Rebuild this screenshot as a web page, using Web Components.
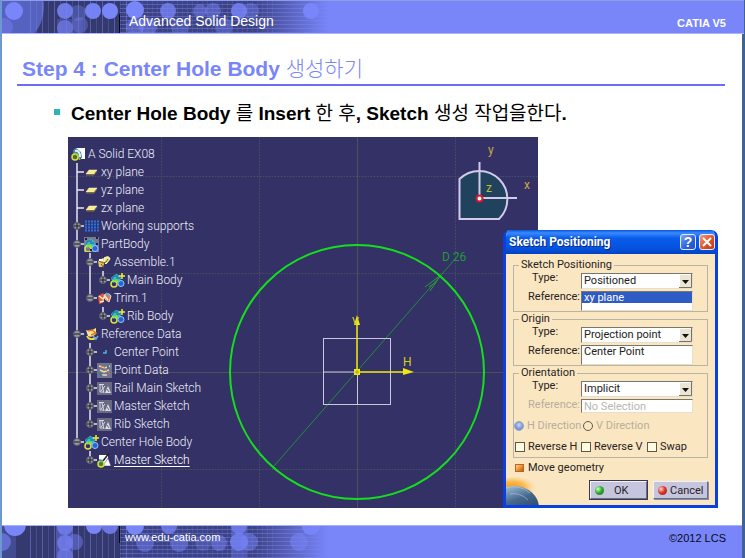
<!DOCTYPE html>
<html lang="ko">
<head>
<meta charset="utf-8">
<title>Advanced Solid Design</title>
<style>
body{margin:0;font-family:"Liberation Sans","Noto Sans CJK KR",sans-serif}
</style>
</head>
<body>
<slide-page>
  <slide-band slot="top" kind="header"><span>Advanced Solid Design</span><strong slot="end">CATIA V5</strong></slide-band>
  <slide-title>Step 4 : Center Hole Body <span lang="ko">생성하기</span></slide-title>
  <slide-bullet>Center Hole Body <span lang="ko">를</span> Insert <span lang="ko">한 후</span>, Sketch <span lang="ko">생성 작업을한다</span>.</slide-bullet>
  <cad-stage>
    <cad-scene>
      <cad-tree>
        <tree-row icon="root">A Solid EX08</tree-row>
        <tree-row guides="T" icon="plane">xy plane</tree-row>
        <tree-row guides="T" icon="plane">yz plane</tree-row>
        <tree-row guides="T" icon="plane">zx plane</tree-row>
        <tree-row guides="T" toggle="+" icon="grid">Working supports</tree-row>
        <tree-row guides="T" toggle="-" icon="partbody">PartBody</tree-row>
        <tree-row guides="IT" toggle="-" icon="assemble">Assemble.1</tree-row>
        <tree-row guides="IIL" toggle="+" icon="body">Main Body</tree-row>
        <tree-row guides="IL" toggle="-" icon="trim">Trim.1</tree-row>
        <tree-row guides="I.L" toggle="+" icon="body">Rib Body</tree-row>
        <tree-row guides="T" toggle="-" icon="refdata">Reference Data</tree-row>
        <tree-row guides="IT" toggle="+" icon="point">Center Point</tree-row>
        <tree-row guides="IT" toggle="+" icon="pointdata">Point Data</tree-row>
        <tree-row guides="IT" toggle="+" icon="sketch">Rail Main Sketch</tree-row>
        <tree-row guides="IT" toggle="+" icon="sketch">Master Sketch</tree-row>
        <tree-row guides="IL" toggle="+" icon="sketch">Rib Sketch</tree-row>
        <tree-row guides="L" toggle="-" icon="body">Center Hole Body</tree-row>
        <tree-row guides=".L" toggle="+" icon="newsketch" current>Master Sketch</tree-row>
      </cad-tree>
    </cad-scene>
    <position-dialog slot="dialog"></position-dialog>
  </cad-stage>
  <slide-band slot="bottom" kind="footer"><a href="http://www.edu-catia.com">www.edu-catia.com</a><span slot="end">©2012 LCS</span></slide-band>
</slide-page>

<script>
function define(name, html, after){
  customElements.define(name, class extends HTMLElement{
    connectedCallback(){
      if(this.shadowRoot) return;
      const root=this.attachShadow({mode:'open'});
      root.innerHTML=typeof html==='function'?html(this):html;
      if(after) after(this,root);
    }
  });
}

define('slide-page',`<style>
:host{display:flex;flex-direction:column;min-height:100vh;box-sizing:border-box;
 background:linear-gradient(90deg,#6f97d0,#4a74ae 60%,#3f6494);padding:0 3px 0 2px}
main{flex:1;background:#fff;padding:0 17px 0 15px;display:flex;flex-direction:column}
</style><slot name="top"></slot><main><slot></slot></main><slot name="bottom"></slot>`);

/* Decorative circle pattern that fades into the plain band colour */
function bandArt(kind){
  let s='';
  const ball=a=>`<circle cx="${a[0]}" cy="${a[1]}" r="${a[2]}" fill="#7986fa" opacity="${a[3]}"/>`;
  s+='<rect width="340" height="33" fill="#343a70"/>';
  s+='<rect x="120" width="220" height="33" fill="#454da0" opacity=".45"/>';
  if(kind==='header') s+='<circle cx="0" cy="6" r="42" fill="#5964c4" opacity=".95"/>'; else s+='<rect width="14" height="33" fill="#434b91"/>';
  for(let x=28;x<135;x+=6) s+=`<rect x="${x}" width="1" height="33" fill="#8b93e8" opacity="${x%4?0.22:0.4}"/>`;
  for(let y=3;y<33;y+=4) s+=`<rect x="118" y="${y}" width="222" height="1" fill="#8b93f0" opacity=".38"/>`;
  for(let x=140;x<275;x+=5) s+=`<rect x="${x}" width="1" height="33" fill="#7781d8" opacity=".22"/>`;
  if(kind==='header'){
    s+=[[12,10,9,1],[2,26,9,.4],[63,10,8,.85],[63,27,8,.7],[76,12,8,.35],[78,24,8,.35],[91,10,8,.95],[108,10,8,1],[133,9,9,1],[133,26,9,.5],[146,26,9,.5],[166,10,8,.75],[178,26,9,.35],[198,10,7,.45],[211,10,8,.45],[222,26,9,.4],[237,10,8,.8],[249,10,8,.4]].map(ball).join('');
    s+='<rect x="55" y="18" width="26" height="15" fill="#6771d8" opacity=".35"/>';
  }else{
    s+=[[13,-1,11,1],[0,16,9,.6],[63,1,8,.8],[63,17,8,.75],[63,30,8,.6],[73,16,8,.45],[92,0,8,1],[108,0,8,.8],[133,0,9,1],[143,17,9,.45],[167,0,8,.75],[177,17,9,.5],[201,17,8,.3],[217,17,8,.5],[237,0,8,.75],[237,16,9,.8],[247,16,9,.5]].map(ball).join('');
    s+='<rect x="54" width="17" height="33" fill="#6f7aea" opacity=".45"/><rect x="229" width="16" height="33" fill="#6f7aea" opacity=".4"/>';
  }
  const over=(kind==='header'?[[309,10,8,1]]:[[297,16,9,.5],[309,0,9,.9]]).map(ball).join('');
  return `<svg width="340" height="33" viewBox="0 0 340 33" aria-hidden="true"><defs><linearGradient id="f"><stop offset="0" stop-color="#7986fa" stop-opacity="0"/><stop offset=".74" stop-color="#7986fa" stop-opacity="0"/><stop offset=".96" stop-color="#7986fa"/></linearGradient></defs>${s}<rect width="340" height="33" fill="url(#f)"/>${over}<path d="M117.500 ${kind==='header'?'13V32':'0V17'}" stroke="#080818"/></svg>`;
}
define('slide-band',el=>`<style>
:host{display:grid;grid-template-columns:1fr auto;background:#7986fa;color:#fff;box-sizing:border-box;height:34px;overflow:hidden;
 border-top:1px solid #8d9dea;align-items:start}
:host([kind=header]){border-bottom:1px solid #b0b6fb;margin-right:-2px}
:host([kind=footer]){border-top-color:#a7affb;height:33px}
svg{grid-area:1/1;display:block}
.start{grid-area:1/1;z-index:1}
:host([kind=header]) .start{font-size:14px;line-height:16px;padding:12px 0 0 127px}
:host([kind=header]) .end{font-size:11px;line-height:12px;padding:16px 18px 0 0}
:host([kind=footer]) .start{font-size:11px;line-height:14px;padding:4px 0 0 123px}
:host([kind=footer]) .end{font-size:11px;line-height:12px;padding:6px 16px 0 0;color:#080818}
::slotted(a){color:#fff;text-decoration:none}
</style>${bandArt(el.getAttribute('kind'))}<div class="start"><slot></slot></div><div class="end"><slot name="end"></slot></div>`);

define('slide-title',`<style>
:host{display:block;border-bottom:2px solid #6d6ef8;padding:22px 5px 2px;color:#7986fa}
h1{margin:0;font-size:21px;line-height:26px;font-weight:700;white-space:nowrap}
::slotted(span){font-weight:300}
</style><h1><slot></slot></h1>`);

define('slide-bullet',`<style>
:host{display:flex;align-items:center;gap:11px;padding:15px 0 11px 37px;font-size:19px;line-height:25px;font-weight:700;color:#000;white-space:nowrap}
i{width:6px;height:6px;background:#2fb3b5;margin-bottom:4px}
p{margin:0}
::slotted(span){font-weight:400}
</style><i></i><p><slot></slot></p>`);

define('cad-stage',`<style>
:host{display:grid;grid-template-columns:1fr 215px;margin:0 7px 0 51px}
.scene{grid-area:1/1;margin-right:-35px;display:grid}
.dialog{grid-area:1/2;padding-top:93px;z-index:1}
</style><div class="scene"><slot></slot></div><div class="dialog"><slot name="dialog"></slot></div>`);

define('cad-scene',`<style>
:host{display:grid;background:#333166;overflow:hidden}
svg{grid-area:1/1;display:block}
.tree{grid-area:1/1;z-index:1;padding:8px 0 0 3px}
text{font-family:Roboto,"Liberation Sans",sans-serif}
</style>
<svg width="470" height="371" viewBox="0 0 470 371" role="img" aria-label="Sketch view">
<g stroke="#49515f" fill="none">
<path d="M93.500 0V371M191.500 0V371M387.500 0V371M0 39.500H470M0 136.500H470M0 332.500H470" stroke-dasharray="1 2"/>
<path d="M93.500 0V371M191.500 0V371M387.500 0V371M0 39.500H470M0 136.500H470M0 332.500H470" opacity=".3"/>
<path d="M289.500 0V371M0 235.500H470" stroke-width="1"/></g>
<path d="M206 329L388 121" stroke="#218c3c"/>
<path d="M373 138L362 154M373 138L357 150M368 145L361 150" stroke="#2a9b3c" fill="none"/>
<circle cx="289" cy="235" r="127" fill="none" stroke="#15df1c" stroke-width="2"/>
<g fill="none" stroke="#c9c6de" stroke-width="1"><rect x="255.500" y="201.500" width="67" height="66"/><path d="M256 235H289M289.500 235V267"/></g>
<g stroke="#efe811" stroke-width="1.500"><path d="M289 235V182M289 235H336"/></g>
<path d="M286 188L289 178L292 188ZM335 231L346 235L335 238Z" fill="#efe811"/><rect x="286" y="232" width="6" height="6" fill="#efe811"/>
<path d="M287 235H291M289 233V237" stroke="#a4a622"/>
<text x="284" y="188" font-size="11" fill="#d5ce24">V</text><text x="335" y="229" font-size="12" fill="#d5ce24">H</text>
<text x="374" y="124" font-size="12" fill="#219b33">D 26</text>
<path d="M391.500 42A28 28 0 0 1 431 82H391.500Z" fill="#20425d" stroke="#d3c9ea" stroke-width="2"/>
<path d="M411.500 25V61H449" fill="none" stroke="#d3c9ea" stroke-width="2"/>
<circle cx="411.500" cy="61.500" r="3" fill="#fff" stroke="#d91731" stroke-width="2"/>
<g font-size="12" fill="#c3aa43"><text x="420" y="17">y</text><text x="456" y="52">x</text><text x="418" y="55" fill="#bebf38">z</text></g>
</svg><div class="tree"><slot></slot></div>`);

define('cad-tree',`<style>:host{display:flex;flex-direction:column;align-items:flex-start;font:300 12px Roboto,"Liberation Sans",sans-serif;color:#f0eef8}</style><slot></slot>`,el=>el.setAttribute('role','tree'));

const sketchGlyph='<path d="M2 3.500H7M3 3V11H7M4 10L8 5M5 4L7 12" stroke="#d7d7e2" fill="none"/><path d="M8 12L11 5L14 12Z" fill="#dcdce6"/><path d="M9 4L13 2M10 8L12 11" stroke="#6b6b83"/>';
const gear='<path d="M3 3L6 1L9 2L11 5L10 8L6 10L2 8L1 5Z" fill="#38bfc5"/><path d="M2 6L4 3L8 3M6 5H10M4 8L6 6" stroke="#175caa" fill="none"/><circle cx="4" cy="11" r="3" fill="none" stroke="#dce33a" stroke-width="1.500"/><path d="M3 9L6 7L8 9" stroke="#86dd3c" fill="none" stroke-width="2"/><circle cx="11" cy="10.500" r="3" fill="#2763dc" stroke="#8dc8ff"/>';
const icons={
 root:'<path d="M5 1H14V12H10V9L5 4Z" fill="#fff"/><path d="M2 3L5 1L10 5L11 11L6 13L2 10Z" fill="#3c849b"/><path d="M4 4Q9 3 9 10" stroke="#d7eef8" stroke-width="2" fill="none"/><circle cx="4" cy="10" r="3" fill="#506f35" stroke="#d8dc3c" stroke-width="1.500"/><path d="M3 6L7 9L9 13" stroke="#a6cf36" fill="none"/>',
 plane:'<path d="M5 5H13L10 9H2Z" fill="#f7eb8b" stroke="#fff9c9" stroke-width=".5"/><path d="M2 10H10L13 6" stroke="#837536" fill="none"/>',
 grid:'<path d="M1 2.500H15M1 5.500H15M1 8.500H15M1 11.500H15" stroke="#2474e6" stroke-width="2" stroke-dasharray="2 1"/>',
 body:gear+'<path d="M12 0V6M9 3H15" stroke="#f5ee39" stroke-width="1.500"/>',
 partbody:'<rect width="15" height="15" fill="#777995"/><g transform="translate(0 1)">'+gear+'</g><path d="M1 2H3M6 13H8M12 1H14M13 6V8" stroke="#172545" stroke-width="2"/>',
 assemble:'<path d="M1 6L6 3L8 6L6 12L2 12Z" fill="#e8c85b"/><path d="M7 3Q12 0 13 4L9 9L7 7Z" fill="#f2eb7b" stroke="#fffbd2"/><path d="M2 6L6 8L9 7L11 4M4 9L7 13" stroke="#72551c" fill="none"/><path d="M2 5H6" stroke="#fff" stroke-width="2"/>',
 trim:'<path d="M1 5L6 2L8 5L6 12L2 13Z" fill="#df583b"/><path d="M7 4Q12 1 14 5L12 11L8 8Z" fill="#ec7251" stroke="#ffdac1"/><path d="M2 5L6 8L8 5L11 9M3 11L7 10" stroke="#fff1bd" stroke-width="1.500" fill="none"/><path d="M9 2L12 5" stroke="#5ba9d8" stroke-width="2"/>',
 refdata:'<path d="M2 3Q6 5 12 1V7Q8 11 4 9Z" fill="#f5e79c"/><path d="M4 4L8 3L12 6L7 8" stroke="#e67823" fill="none" stroke-width="1.500"/><path d="M3 9Q5 14 12 11" stroke="#edda3d" stroke-width="2" fill="none"/><path d="M9 9L12 12L14 9" stroke="#65a6de" fill="none" stroke-width="1.500"/>',
 point:'<path d="M6 8H9V5" stroke="#48b5df" stroke-width="1.500" fill="none"/>',
 pointdata:'<rect width="15" height="15" fill="#72738f"/><path d="M2 3L8 5L13 3M3 7L7 9L12 7M4 12L10 12" stroke="#e9dcaf" stroke-width="1.500" fill="none"/><path d="M3 5L6 3L10 8L13 11" stroke="#d4704a" fill="none"/><path d="M2 10L5 13M11 2V6" stroke="#3d7a93" stroke-width="2"/>',
 sketch:'<rect y="1" width="15" height="13" fill="#686982"/>'+sketchGlyph,
 newsketch:'<path d="M2 2H11V8L7 12H2Z" fill="#fff"/><path d="M6 13L11 5L14 13Z" fill="#fff" stroke="#333166" stroke-width=".5"/><path d="M12 0L6 8" stroke="#222" stroke-width="1.500"/><circle cx="4" cy="11" r="3" fill="#557d3a" stroke="#d6df37" stroke-width="1.500"/><path d="M2 7L6 8" stroke="#39a2a6" stroke-width="2"/>'
};
define('tree-row',el=>{
  const g=el.getAttribute('guides')||'',n=g.length,t=el.getAttribute('toggle');
  let p='';
  [...g].forEach((k,i)=>{const x=i*13+6;
    if(k==='I'||k==='T')p+=`M${x} 0V18`; if(k==='L')p+=`M${x} 0V9`;
    if(k==='T'||k==='L')p+=`M${x} 9H${x+7}`;});
  const tx=n*13-7;
  const tog=t?`<circle cx="${tx}" cy="9" r="3.500" fill="#98989f" stroke="#5c5b68"/><path d="M${tx-3} 9H${tx+3}${t==='+'?`M${tx} 6V12`:''}" stroke="#1a1a22"/>`:'';
  return `<style>:host{display:flex;height:18px;align-items:center;line-height:18px;white-space:nowrap}
svg{display:block;flex:none}.i{margin-right:2px}
:host([current]) span{text-decoration:underline;text-underline-offset:2px;color:#fff}</style>
${n?`<svg width="${n*13}" height="18"><path d="${p}" stroke="#e6e5ef" stroke-width="1.500" fill="none"/>${tog}</svg>`:''}<svg class="i" width="15" height="15">${icons[el.getAttribute('icon')]}</svg><span><slot></slot></span>`;
},el=>el.setAttribute('role','treeitem'));

/* One labelled group of the dialog: a type drop-down and a reference field */
define('position-group',el=>{
  const a=k=>el.getAttribute(k)||'',off=el.hasAttribute('off');
  return `<style>
:host{display:block}
fieldset{margin:0;padding:0 14px 0 0;border:1px solid #b9b4a8;min-width:0}
legend{margin-left:5px;padding:0 2px;line-height:12px;height:12px}
.rows{display:grid;grid-template-columns:67px 1fr;row-gap:2px;padding-top:2px}
label{line-height:12px;text-align:right;padding-right:1px}
label.t{text-align:left;padding-left:18px;line-height:10px}
.pick{display:grid}
select,input{font:inherit;box-sizing:border-box;width:100%;min-width:0;margin:0;border:1px solid #77766f;border-right-color:#e9dfc8;border-bottom-color:#e9dfc8;border-radius:0;background:#fff;color:#222;outline:0}
select{grid-area:1/1;appearance:none;height:16px;padding:0 15px 0 2px;line-height:14px}
.pick svg{grid-area:1/1;justify-self:end;margin:1px;pointer-events:none}
input{height:20px;line-height:11px;padding:0 2px 7px}
.sel input{background:linear-gradient(#2f5cc4 11px,#fff 11px);color:#fff}
.off input{height:14px;padding:0 2px}
.off label.r{color:#b7ae9c}
.off input:disabled{color:#b7b6b2}
</style><fieldset><legend>${a('name')}</legend><div class="rows ${off?'off':''} ${el.hasAttribute('selected')?'sel':''}">
<label class="t" for="t">Type:</label><div class="pick"><select id="t"><option>${a('type')}</option></select>
<svg width="13" height="14"><rect width="13" height="14" fill="#ece5d3"/><path d="M0.500 13V0.500H12" stroke="#fff" fill="none"/><path d="M12.500 0V13.500H0" stroke="#77736a" fill="none"/><path d="M3 6H10L6.500 10Z" fill="#111"/></svg></div>
<label class="r" for="r">Reference:</label><input id="r" type="text" value="${a('reference')}" ${off?'disabled':''}>
</div><slot></slot></fieldset>`;
});

define('choice-box',el=>{
  const a=k=>el.getAttribute(k)||'';
  return `<style>
:host{display:block}
label{display:flex;align-items:center;gap:3px;white-space:nowrap;line-height:12px}
input{appearance:none;flex:none;margin:0;width:10px;height:10px;box-sizing:border-box;border:1px solid #5a594f;background:#fffbe0}
input[type=radio]{border-radius:5px;background:transparent}
input[type=radio]:checked{border-color:#8ea3cf;background:radial-gradient(circle at 4px 3px,#c9d8f4,#7896d4 60%)}
.move input{width:9px;height:8px;margin-right:1px;border:1px solid #b9652a;background:linear-gradient(135deg,#ffd28b,#ef952f 50%,#b85a15)}
.dim{color:#b7ae9c}
</style><label class="${a('look')}"><input type="${a('type')}" ${el.hasAttribute('checked')?'checked':''} ${a('look')==='dim'?'disabled':''}>${a('text')}</label>`;
});

define('position-dialog',`<style>
:host{display:block;box-sizing:border-box;border:3px solid #0b3fe0;border-top:0;border-radius:7px 7px 0 0;background:#fbe6c2;overflow:hidden;
 font:11px Roboto,"Liberation Sans",sans-serif;color:#26241f}
header{display:flex;align-items:center;gap:3px;height:24px;margin:0 -3px;padding:0 3px 0 6px;background:linear-gradient(#0a56dc,#3a8bff 3px,#0a5cec 8px,#0553e0 18px,#0343c4)}
h2{flex:1;margin:0;font:700 12px/16px Roboto,"Liberation Sans",sans-serif;color:#fff;text-shadow:1px 1px #0a2a80;white-space:nowrap}
header button{width:16px;height:16px;padding:0;border:1px solid #e4edff;border-radius:3px;display:grid;place-items:center;background:linear-gradient(135deg,#7fa5f6,#2860df 60%,#2454c4);color:#fff;font:700 14px/14px "Liberation Sans",sans-serif}
header .x{background:linear-gradient(135deg,#f19a76,#dc4f22 60%,#c03c12)}
.body{padding:5px 7px 0}
position-group+position-group{margin-top:1px}
.radios,.checks{display:grid;margin-right:-14px}
.radios{grid-template-columns:69px 1fr;padding-top:7px}
.checks{grid-template-columns:66px 66px 1fr;padding:9px 0 4px 1px}
.move{padding:4px 0 0 2px}
footer{display:flex;align-items:flex-end;gap:6px;padding:0 7px 0 0;height:31px}
footer svg.planet{display:block;margin-right:auto}
footer button{display:flex;align-items:center;flex:none;box-sizing:border-box;height:18px;margin-bottom:6px;padding:0 4px;border:1px solid;border-color:#f2f0fa #6c6a88 #6c6a88 #f2f0fa;background:#c6c5de;font:inherit;color:#26241f;box-shadow:1px 1px #8e8ba0}
.ok{width:57px;gap:10px;outline:1px solid #3b394f}
.cancel{width:55px;gap:3px}
footer i{flex:none;width:9px;height:9px;border-radius:5px;background:radial-gradient(circle at 3px 3px,#d6ffc8,#2fae31 45%,#0c6318)}
.cancel i{background:radial-gradient(circle at 3px 3px,#ffd7c8,#e0382b 45%,#8e120e)}
</style>
<header><h2>Sketch Positioning</h2><button type="button" aria-label="Help">?</button><button type="button" class="x" aria-label="Close"><svg width="12" height="12"><path d="M2 2L10 10M10 2L2 10" stroke="#fff" stroke-width="2"/></svg></button></header>
<div class="body">
<position-group name="Sketch Positioning" type="Positioned" reference="xy plane" selected></position-group>
<position-group name="Origin" type="Projection point" reference="Center Point"></position-group>
<position-group name="Orientation" type="Implicit" reference="No Selection" off>
<div class="radios"><choice-box type="radio" look="dim" checked text="H Direction"></choice-box><choice-box type="radio" look="dim" text="V Direction"></choice-box></div>
<div class="checks"><choice-box type="checkbox" text="Reverse H"></choice-box><choice-box type="checkbox" text="Reverse V"></choice-box><choice-box type="checkbox" text="Swap"></choice-box></div>
</position-group>
<div class="move"><choice-box type="checkbox" look="move" checked text="Move geometry"></choice-box></div>
</div>
<footer><svg class="planet" width="50" height="31" viewBox="0 0 50 31" aria-hidden="true"><defs><radialGradient id="g" cx=".45" cy=".4"><stop offset="0" stop-color="#f59a1c"/><stop offset=".5" stop-color="#fbbd58"/><stop offset="1" stop-color="#fbe6c2" stop-opacity="0"/></radialGradient><linearGradient id="p" x1=".3" y1="0" x2=".7" y2="1"><stop offset="0" stop-color="#9fc0da"/><stop offset=".35" stop-color="#46688e"/><stop offset="1" stop-color="#16233f"/></linearGradient></defs><ellipse cx="9" cy="16" rx="26" ry="13" fill="url(#g)"/><ellipse cx="9" cy="34" rx="24" ry="22" fill="url(#p)"/><path d="M0 14Q14 10 24 19M4 20Q14 18 22 26" stroke="#b9d6e4" fill="none" opacity=".5"/></svg>
<button type="button" class="ok"><i></i>OK</button><button type="button" class="cancel"><i></i>Cancel</button></footer>`);
</script>
</body>
</html>
